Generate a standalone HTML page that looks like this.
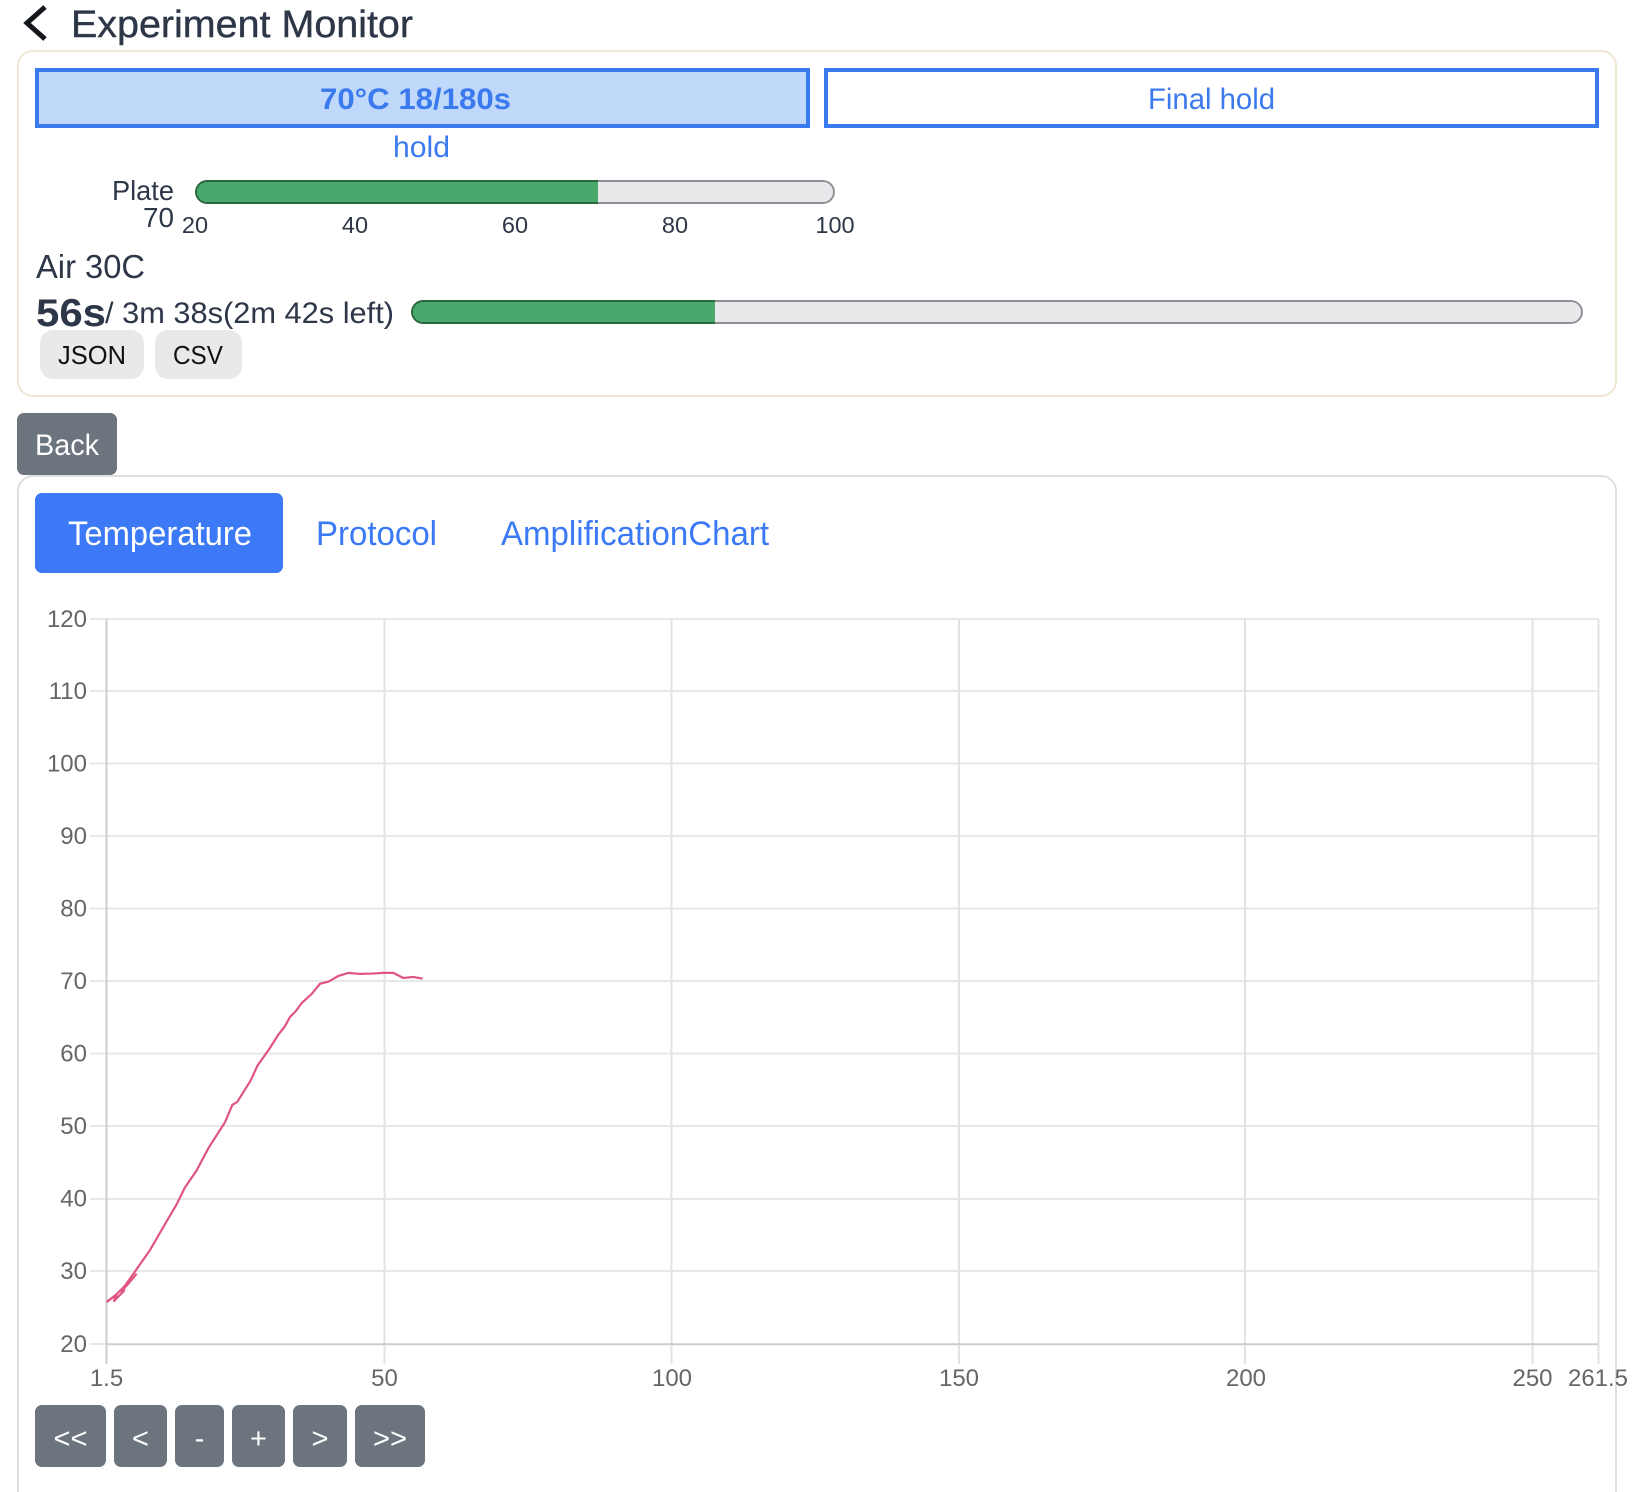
<!DOCTYPE html>
<html lang="en">
<head>
<meta charset="utf-8">
<title>Experiment Monitor</title>
<style>
html,body{margin:0;padding:0;background:#fff;width:1636px;height:1492px;overflow:hidden}
body{position:relative;font-family:"Liberation Sans",sans-serif}
.a{position:absolute;box-sizing:border-box}
.card{border:2px solid #efe7d3;border-radius:16px;left:17px;top:50px;width:1600px;height:347px}
.card2{border:2px solid #dfdfdf;border-radius:16px;left:17px;top:475px;width:1600px;height:1040px}
.step{border:4px solid #3b79ee;top:68px;height:60px}
.bar{overflow:hidden;border-radius:12px;height:24px}
.track{position:absolute;inset:0;border:2px solid #8e8e98;border-radius:12px;background:#e9e9ec;box-sizing:border-box}
.fill{position:absolute;left:0;top:0;bottom:0;background:#4ba86c;border:2px solid #25693e;border-right:0;border-radius:12px 0 0 12px;box-sizing:border-box}
.gray{background:#e9e9eb;border-radius:13px;top:330px;height:49px}
.btn{background:#6c757d;border-radius:7px}
svg{position:absolute;left:0;top:0}
text{font-family:"Liberation Sans",sans-serif}
</style>
</head>
<body>
<div class="a card"></div>
<div class="a step" style="left:35px;width:775px;background:#c0d9fb"></div>
<div class="a step" style="left:824px;width:775px;background:#fff"></div>

<div class="a bar" style="left:195px;top:180px;width:640px">
  <div class="track"></div><div class="fill" style="width:403px"></div>
</div>
<div class="a bar" style="left:411px;top:300px;width:1172px">
  <div class="track"></div><div class="fill" style="width:304px"></div>
</div>

<div class="a gray" style="left:40px;width:104px"></div>
<div class="a gray" style="left:155px;width:87px"></div>

<div class="a btn" style="left:17px;top:413px;width:100px;height:62px"></div>
<div class="a card2"></div>
<div class="a" style="left:35px;top:493px;width:248px;height:80px;background:#3b79f6;border-radius:7px"></div>

<div class="a btn" style="left:35px;top:1405px;width:71px;height:62px"></div>
<div class="a btn" style="left:114px;top:1405px;width:53px;height:62px"></div>
<div class="a btn" style="left:175px;top:1405px;width:49px;height:62px"></div>
<div class="a btn" style="left:232px;top:1405px;width:53px;height:62px"></div>
<div class="a btn" style="left:293px;top:1405px;width:54px;height:62px"></div>
<div class="a btn" style="left:355px;top:1405px;width:70px;height:62px"></div>

<svg width="1636" height="1492" viewBox="0 0 1636 1492" xmlns="http://www.w3.org/2000/svg">
  <path d="M45 7 L27 23 L45 39" fill="none" stroke="#14171c" stroke-width="5"/>
  <text x="71" y="37" font-size="38" fill="#2d3748" stroke="#2d3748" stroke-width=".4" textLength="342" lengthAdjust="spacingAndGlyphs">Experiment Monitor</text>

  <text x="320" y="109" font-size="30" font-weight="700" fill="#3b79ee" textLength="191" lengthAdjust="spacingAndGlyphs">70°C 18/180s</text>
  <text x="1148" y="109" font-size="30" fill="#3b79ee" textLength="127" lengthAdjust="spacingAndGlyphs">Final hold</text>
  <text x="393" y="157" font-size="30" fill="#3b79ee" textLength="57" lengthAdjust="spacingAndGlyphs">hold</text>

  <text x="112" y="200" font-size="28" fill="#2d3748" textLength="62" lengthAdjust="spacingAndGlyphs">Plate</text>
  <text x="143" y="227" font-size="28" fill="#2d3748" textLength="31" lengthAdjust="spacingAndGlyphs">70</text>

  <g font-size="23.5" fill="#2d3748" text-anchor="middle">
    <text x="195" y="233">20</text>
    <text x="355" y="233">40</text>
    <text x="515" y="233">60</text>
    <text x="675" y="233">80</text>
    <text x="835" y="233">100</text>
  </g>

  <text x="36" y="278" font-size="33" fill="#2d3748" textLength="109" lengthAdjust="spacingAndGlyphs">Air 30C</text>
  <text x="36" y="326" font-size="39" font-weight="700" fill="#2d3748" textLength="70" lengthAdjust="spacingAndGlyphs">56s</text>
  <text x="105" y="323" font-size="30" fill="#2d3748" textLength="289" lengthAdjust="spacingAndGlyphs">/ 3m 38s(2m 42s left)</text>

  <text x="58" y="364" font-size="26" fill="#111" textLength="68" lengthAdjust="spacingAndGlyphs">JSON</text>
  <text x="173" y="364" font-size="26" fill="#111" textLength="50" lengthAdjust="spacingAndGlyphs">CSV</text>
  <text x="35" y="455" font-size="30" fill="#fff" textLength="64" lengthAdjust="spacingAndGlyphs">Back</text>

  <text x="68" y="545" font-size="34" fill="#fff" textLength="184" lengthAdjust="spacingAndGlyphs">Temperature</text>
  <text x="316" y="545" font-size="34" fill="#3b79f6" textLength="121" lengthAdjust="spacingAndGlyphs">Protocol</text>
  <text x="501" y="545" font-size="34" fill="#3b79f6" textLength="268" lengthAdjust="spacingAndGlyphs">AmplificationChart</text>

  <!-- horizontal grid -->
  <g stroke="#e8e8e8" stroke-width="2" fill="none">
    <path d="M90 619H1598M90 691H1598M90 763.5H1598M90 836H1598M90 908.5H1598M90 981H1598M90 1053.5H1598M90 1126H1598M90 1199H1598M90 1271H1598"/>
    <path d="M90 1344H106"/>
  </g>
  <g stroke="#e3e3e5" stroke-width="2" fill="none">
    <path d="M384.5 619V1364M671.5 619V1364M959 619V1364M1245 619V1364M1532.5 619V1364M1598.5 619V1364"/>
  </g>
  <path d="M106.5 619V1364M106 1344.2H1598" stroke="#cdcdcd" stroke-width="2" fill="none"/>

  <g font-size="24" fill="#666" text-anchor="end">
    <text x="87" y="627">120</text>
    <text x="87" y="699">110</text>
    <text x="87" y="771.5">100</text>
    <text x="87" y="844">90</text>
    <text x="87" y="916.5">80</text>
    <text x="87" y="989">70</text>
    <text x="87" y="1061.5">60</text>
    <text x="87" y="1134">50</text>
    <text x="87" y="1206.5">40</text>
    <text x="87" y="1279">30</text>
    <text x="87" y="1352">20</text>
  </g>
  <g font-size="24" fill="#666" text-anchor="middle">
    <text x="106.5" y="1386">1.5</text>
    <text x="384.5" y="1386">50</text>
    <text x="672" y="1386">100</text>
    <text x="959" y="1386">150</text>
    <text x="1246" y="1386">200</text>
    <text x="1532.5" y="1386">250</text>
    <text x="1598" y="1386">261.5</text>
  </g>

  <g transform="translate(0,960) scale(.33333,.3393)" fill="none" stroke="#e0557f" stroke-linejoin="round">
    <path vector-effect="non-scaling-stroke" stroke-width="2.2" d="M320 1008 L345 990 L375 960 L400 925 L450 855 L500 770 L530 720 L555 670 L590 620 L625 555 L675 478 L697 427 L712 418 L752 355 L772 312 L808 262 L835 220 L855 195 L870 168 L888 150 L905 127 L935 100 L960 70 L985 64 L1015 47 L1045 38 L1080 41 L1115 40 L1150 38 L1180 38 L1210 53 L1240 50 L1268 55"/>
    <path vector-effect="non-scaling-stroke" stroke-width="2.2" d="M320 1008 L350 985 L342 1005 L372 975 L362 985 L385 950 L380 960 L410 925"/>
  </g>

  <g font-size="29" fill="#fff" text-anchor="middle">
    <text x="70.5" y="1448" textLength="34" lengthAdjust="spacingAndGlyphs">&lt;&lt;</text>
    <text x="140.5" y="1448">&lt;</text>
    <text x="199.5" y="1448">-</text>
    <text x="258.5" y="1448">+</text>
    <text x="320" y="1448">&gt;</text>
    <text x="390" y="1448" textLength="34" lengthAdjust="spacingAndGlyphs">&gt;&gt;</text>
  </g>
</svg>
</body>
</html>
